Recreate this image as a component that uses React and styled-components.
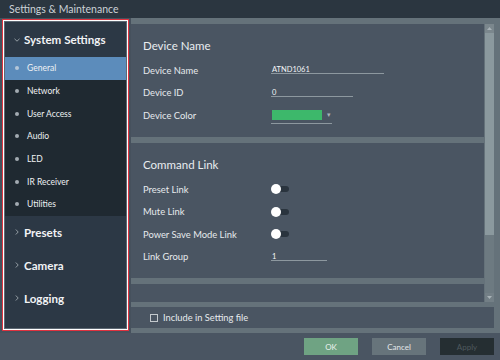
import React from 'react';
import styled, { createGlobalStyle } from 'styled-components';

const GlobalStyle = createGlobalStyle`
    html, body {
        margin: 0;
        padding: 0;
        background: #4a5562;
    }
    * {
        box-sizing: border-box;
    }
`;

const Window = styled.div`
    width: 500px;
    height: 360px;
    display: flex;
    flex-direction: column;
    background: #4a5562;
    font-family: Lato, "Open Sans", sans-serif;
    color: #e6eaed;
    overflow: hidden;
`;

const TitleBar = styled.div`
    height: 18px;
    display: flex;
    align-items: center;
    padding-left: 9px;
    background: #2b3640;
    color: #cbd2d7;
    font-size: 10.5px;
`;

const Body = styled.div`
    height: 315px;
    display: flex;
    background: #46515d;
`;

const SidebarFrame = styled.div`
    width: 127px;
    margin: 1px 0 2px 2px;
    border: 1px solid #e0323f;
    box-shadow: inset 0 0 0 1px #ffffff;
    padding: 2px;
    background: #5d6873;
    display: flex;
`;

const Sidebar = styled.div`
    flex: 1;
    display: flex;
    flex-direction: column;
    background: #2c3845;
`;

const GroupHeader = styled.div`
    height: ${(p) => (p.$open ? '35px' : '33px')};
    display: flex;
    align-items: center;
    gap: 4px;
    padding-left: 9px;
    font-size: 11.6px;
    font-weight: 700;
    color: #f1f3f5;
`;

const ItemList = styled.div`
    display: flex;
    flex-direction: column;
    background: #1f2931;
`;

const Item = styled.div`
    height: 22.7px;
    display: flex;
    align-items: center;
    gap: 8px;
    padding-left: 10px;
    font-size: 8.5px;
    color: #eef1f3;
    background: ${(p) => (p.$active ? '#5c8cbb' : 'transparent')};

    &::before {
        content: '';
        width: 4px;
        height: 4px;
        border-radius: 50%;
        background: ${(p) => (p.$active ? '#b4c7d8' : '#a3abb2')};
    }
`;

const Main = styled.div`
    flex: 1;
    margin-left: 2px;
    padding: 6px 6px 5px 0;
    display: flex;
    flex-direction: column;
    gap: 5px;
    background: #65727a;
`;

const ScrollRow = styled.div`
    height: 278px;
    display: flex;
    gap: 1px;
`;

const Content = styled.div`
    flex: 1;
    display: flex;
    flex-direction: column;
    gap: 6px;
    overflow: hidden;
`;

const Panel = styled.div`
    flex-shrink: 0;
    height: ${(p) => p.$h}px;
    padding: 14px 0 0 12px;
    background: #4a5562;
`;

const Heading = styled.div`
    height: 16px;
    margin-bottom: 5px;
    font-size: 11.5px;
    line-height: 16px;
    color: #e9edf0;
`;

const Row = styled.div`
    height: 22.5px;
    display: grid;
    grid-template-columns: 128px 1fr;
    align-items: center;
    font-size: 9.4px;
`;

const Field = styled.div`
    width: ${(p) => p.$w}px;
    height: 8px;
    line-height: 7px;
    font-size: 7.5px;
    padding-left: 1px;
    color: #f4f6f7;
    border-bottom: 1px solid #8d989f;
`;

const ColorSelect = styled.div`
    width: 61px;
    height: 14px;
    margin-top: 4px;
    display: flex;
    align-items: flex-start;
    gap: 5px;
    padding-left: 1px;
    border-bottom: 1px solid #8d989f;
    color: #a8b1b7;
    font-size: 7px;
`;

const Swatch = styled.div`
    width: 50px;
    height: 10px;
    background: #3db86b;
`;

const Toggle = styled.div`
    position: relative;
    width: 18px;
    height: 10px;

    &::before {
        content: '';
        position: absolute;
        left: 4px;
        top: 2px;
        width: 14px;
        height: 6px;
        border-radius: 3px;
        background: #2a343e;
    }

    &::after {
        content: '';
        position: absolute;
        left: 0;
        top: 0;
        width: 10px;
        height: 10px;
        border-radius: 50%;
        background: #ffffff;
    }
`;

const ScrollBar = styled.div`
    width: 9px;
    display: flex;
    flex-direction: column;
    background: #6d7a81;
`;

const ScrollButton = styled.div`
    height: 9px;
    display: flex;
    align-items: center;
    justify-content: center;
    background: ${(p) => (p.$up ? '#7b878d' : '#737f86')};
`;

const Thumb = styled.div`
    height: 202px;
    background: #8b999e;
`;

const Track = styled.div`
    flex: 1;
`;

const IncludePanel = styled.div`
    height: 21px;
    display: flex;
    align-items: center;
    gap: 5px;
    padding-left: 19px;
    background: #4a5562;
    font-size: 9.3px;
`;

const CheckBox = styled.div`
    width: 8px;
    height: 8px;
    border: 1px solid #c3c9cd;
`;

const Footer = styled.div`
    flex: 1;
    display: flex;
    align-items: center;
    justify-content: flex-end;
    gap: 14px;
    padding-right: 6px;
    background: #4a5562;
`;

const Button = styled.div`
    width: 54px;
    height: 17px;
    display: flex;
    align-items: center;
    justify-content: center;
    font-size: 8px;
    background: ${(p) => p.$bg};
    color: ${(p) => p.$fg};
`;

const Chevron = ({ open }) => (
    <svg width="6" height="6" viewBox="0 0 6 6">
        <polyline
            points={open ? '0.5,1.8 3,4.2 5.5,1.8' : '1.8,0.5 4.2,3 1.8,5.5'}
            fill="none"
            stroke="#9ea7ae"
            strokeWidth="0.9"
        />
    </svg>
);

const Arrow = ({ up }) => (
    <svg width="5" height="3" viewBox="0 0 5 3">
        <polygon points={up ? '0,3 2.5,0 5,3' : '0,0 2.5,3 5,0'} fill="#a9b3b8" />
    </svg>
);

const systemItems = ['General', 'Network', 'User Access', 'Audio', 'LED', 'IR Receiver', 'Utilities'];

const App = () => {
    return (
        <Window>
            <GlobalStyle />
            <TitleBar>Settings &amp; Maintenance</TitleBar>
            <Body>
                <SidebarFrame>
                    <Sidebar>
                        <GroupHeader $open>
                            <Chevron open />
                            System Settings
                        </GroupHeader>
                        <ItemList>
                            {systemItems.map((name, i) => (
                                <Item key={name} $active={i === 0}>{name}</Item>
                            ))}
                        </ItemList>
                        <GroupHeader><Chevron />Presets</GroupHeader>
                        <GroupHeader><Chevron />Camera</GroupHeader>
                        <GroupHeader><Chevron />Logging</GroupHeader>
                    </Sidebar>
                </SidebarFrame>
                <Main>
                    <ScrollRow>
                        <Content>
                            <Panel $h={113}>
                                <Heading>Device Name</Heading>
                                <Row>Device Name<Field $w={113}>ATND1061</Field></Row>
                                <Row>Device ID<Field $w={82}>0</Field></Row>
                                <Row>
                                    Device Color
                                    <ColorSelect>
                                        <Swatch />
                                        <span>▾</span>
                                    </ColorSelect>
                                </Row>
                            </Panel>
                            <Panel $h={135}>
                                <Heading>Command Link</Heading>
                                <Row>Preset Link<Toggle /></Row>
                                <Row>Mute Link<Toggle /></Row>
                                <Row>Power Save Mode Link<Toggle /></Row>
                                <Row>Link Group<Field $w={56}>1</Field></Row>
                            </Panel>
                            <Panel $h={60} />
                        </Content>
                        <ScrollBar>
                            <ScrollButton $up><Arrow up /></ScrollButton>
                            <Thumb />
                            <Track />
                            <ScrollButton><Arrow /></ScrollButton>
                        </ScrollBar>
                    </ScrollRow>
                    <IncludePanel>
                        <CheckBox />
                        Include in Setting file
                    </IncludePanel>
                </Main>
            </Body>
            <Footer>
                <Button $bg="#6fa383" $fg="#e9f1ec">OK</Button>
                <Button $bg="#67747b" $fg="#e4e8ea">Cancel</Button>
                <Button $bg="#252e32" $fg="#4f595e">Apply</Button>
            </Footer>
        </Window>
    );
};

export default App;
